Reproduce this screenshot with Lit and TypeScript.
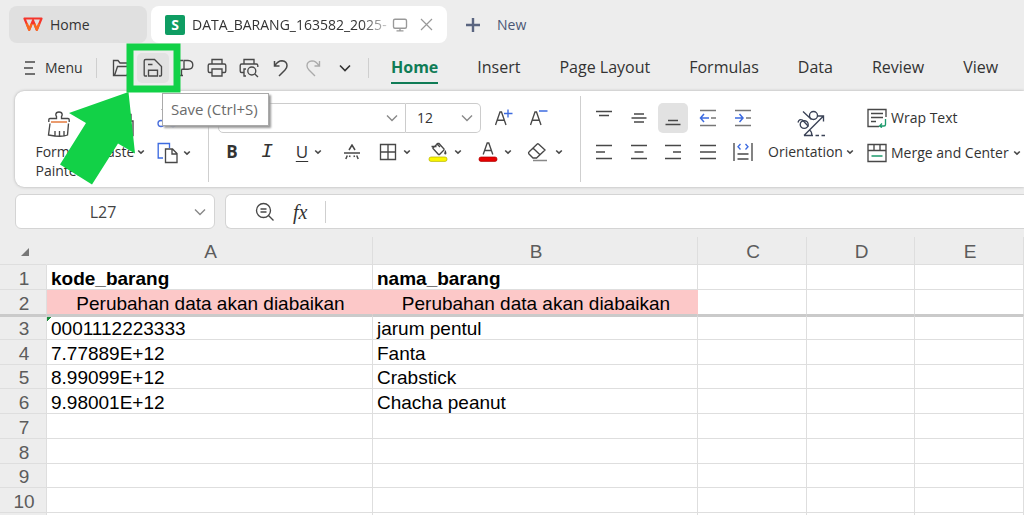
import { LitElement, html, svg, css, nothing, TemplateResult } from "lit";
import { customElement, state } from "lit/decorators.js";
import { classMap } from "lit/directives/class-map.js";

const icon = (w: number, h: number, body: unknown, cls = "") =>
  html`<svg class="icon ${cls}" width=${w} height=${h} viewBox="0 0 ${w} ${h}" aria-hidden="true">${body}</svg>`;

const chevron = () => icon(8, 8, svg`<path d="M1.2 2.5 4 5.2 6.8 2.5" stroke-width="1.6"/>`);
const wideChevron = (cls = "") => icon(12, 8, svg`<path d="M1 1.5 6 6.5 11 1.5"/>`, cls);

const wps = icon(20, 15, svg`
  <path d="M1.5 1.5H18.5L13.8 12.8 10 3.5 6.2 12.8Z" stroke="#f5352b" stroke-width="2.2" stroke-linejoin="round"/>
  <path d="M3.8 6.5 6.2 12.8 8.6 6.8M11.4 6.8 13.8 12.8 16.2 6.5" stroke="#f96a1e" stroke-width="2.2" stroke-linejoin="round"/>`);
const monitor = icon(16, 14, svg`
  <path d="M3 1.2H13Q14.5 1.2 14.5 2.7V8.7Q14.5 10.2 13 10.2H3Q1.5 10.2 1.5 8.7V2.7Q1.5 1.2 3 1.2ZM4.5 12.8H11.5M8 10.2V12.8" stroke="#999"/>`);
const close = icon(13, 13, svg`<path d="M1 1 12 12M12 1 1 12" stroke="#999" stroke-width="1.2"/>`);
const plus = icon(16, 16, svg`<path d="M8 1V15M1 8H15" stroke="#5a6580" stroke-width="2.4"/>`);
const burger = icon(12, 14, svg`<path d="M1 1H11M0 7H9M1 13H11"/>`);

const open = icon(20, 20, svg`<path d="M3.5 17.5H2.5V2.5H7L9 5H16.5V8M3.5 17.5 6.5 8.5H19L16 17.5Z"/>`);
const save = icon(20, 20, svg`
  <path d="M4 18H2Q1.2 18 1.2 17V3Q1.2 1.5 2.7 1.5H11.5L18.5 8.5V17Q18.5 18 17.5 18H16M5.5 18V12.2H14.5V18Z M5 6.5H9.5"/>`);
const exportPdf = icon(20, 20, svg`
  <path d="M8 17.5H1.5V2.5H8M9 12V2.5H13Q17.8 2.7 17.8 7 17.8 11.2 13 11.2H6.5M6.5 11.2V17"/>`);
const print = icon(20, 20, svg`
  <path d="M5 6V1.5H15V6M5 14.5H2.5Q1.2 14.5 1.2 13V7.5Q1.2 6 2.7 6H17.3Q18.8 6 18.8 7.5V13Q18.8 14.5 17.5 14.5H15M5 11H15V18H5Z"/>`);
const preview = icon(20, 20, svg`
  <path d="M5 6V1.5H15V6M5 14.5H2.5Q1.2 14.5 1.2 13V7.5Q1.2 6 2.7 6H17.3Q18.8 6 18.8 7.5V9M7 18H5V11H7"/>
  <circle cx="12.8" cy="13" r="4"/><path d="M15.8 16 19 19"/>`);
const undo = icon(16, 18, svg`<path d="M1.5 2V7H6.5M1.8 6.8Q5 1.8 9 1.8 14 2.2 14 6.8 14 9 12 11L6 17" stroke-width="1.5"/>`);
const redo = icon(16, 18, svg`<path d="M14.5 2V7H9.5M14.2 6.8Q11 1.8 7 1.8 2 2.2 2 6.8 2 9 4 11L10 17" stroke="#aaa"/>`);

const painter = icon(24, 26, svg`
  <path d="M1.8 11V8.8Q1.8 7.5 3 7.5H9.5V5.5Q8.8 4.5 8.8 3.5 9 1 12 1 15 1 15.2 3.5 15.2 4.5 14.5 5.5V7.5H21Q22.2 7.5 22.2 8.8V11M3 12.5 1.5 24Q15 26.5 20.5 24L21.5 12.5M8 24.5V20M12.5 25V20M17 24.5V20"/>
  <path d="M4 11H20" stroke="#e37a3e" stroke-width="1.6"/>`);
const paste = icon(24, 26, svg`
  <path d="M6 3.5H2V23H9M17 3.5H21V9M7 1.5H16V6H7ZM11 10H23V24.5H11Z"/>`);
const cut = icon(20, 20, svg`
  <path d="M5 1 13 14M15 1 7 14"/><g stroke="#4a6fdc"><circle cx="4" cy="15.5" r="3"/><circle cx="16" cy="15.5" r="3"/></g>`);
const copy = icon(22, 22, svg`
  <path d="M6 16H1.2V1.5H12.5V6" stroke="#3d6be0"/>
  <path d="M8.5 7H15.5L20 11.5V20.5H8.5ZM15 7V12H20" fill="#fff"/>`);

const strike = icon(18, 16, svg`<path d="M6 6 9 1 12 6M1 9H17M4.3 11.5 2.8 15M7 11.5 6.5 13M13.7 11.5 15.2 15M11 11.5 11.5 13" stroke-width="1.5"/>`);
const borders = icon(18, 18, svg`<path d="M1.5 1.5H16.5V16.5H1.5ZM9 1.5V16.5M1.5 9H16.5"/>`);
const fill = icon(20, 20, svg`
  <path d="M5 5V6.5L10.5 12.5H11.5L16 8V7L11 1.5H9.8L5.5 5.5M3.5 4.5H8.5M8.5 1.5 12 5"/>
  <path d="M17.5 8Q19.5 12.5 17.2 12.5 15 12.2 17.5 8" fill="#444" stroke="none"/>
  <rect x="1" y="15" width="18" height="4.4" rx="2" fill="#fcf800" stroke="#b5b000" stroke-width=".7"/>`);
const fontColor = icon(20, 20, svg`
  <path d="M5.2 12.5 9.2 1H10.8L14.8 12.5M6.8 8.5H13.2"/>
  <rect x="1" y="15" width="18" height="4.4" rx="2" fill="#e80000" stroke="#a00" stroke-width=".7"/>`);
const eraser = icon(22, 20, svg`
  <path d="M11.5 2 18 8 9.5 16H6L2 12Q1 10.8 2.2 9.8L10 2.2Q10.8 1.4 11.5 2ZM6.2 6.2 13 12.8"/>
  <path d="M6 18.5H20" stroke="#888"/>`);
const grow = icon(20, 20, svg`<path d="M1.5 17 6 4H7.5L12 17M3.2 12.2H10.3"/><path d="M14 1.5V9.5M10 5.5H18.5" stroke="#3d6be0"/>`);
const shrink = icon(20, 20, svg`<path d="M1.5 17 6 4H7.5L12 17M3.2 12.2H10.3"/><path d="M10 3H18.5" stroke="#3d6be0"/>`);

const lines = (d: string) => icon(18, 18, svg`<path d=${d}/>`);
const outdent = icon(18, 18, svg`
  <path d="M1 1.5H17M12 9H17M1 16.5H17" stroke="#777"/><path d="M10 9H1.5M5 5 1.5 9 5 13" stroke="#3d6be0" stroke-width="1.5"/>`);
const indent = icon(18, 18, svg`
  <path d="M1 1.5H17M12 9H17M1 16.5H17" stroke="#777"/><path d="M1 9H9M5.5 5 9 9 5.5 13" stroke="#3d6be0" stroke-width="1.5"/>`);
const distribute = icon(20, 20, svg`
  <path d="M1 1V19M19 1V19M4.5 12H15.5M4.5 17H15.5"/><path d="M7.5 2 5 4.8 7.5 7.5M12.5 2 15 4.8 12.5 7.5" stroke="#3d6be0"/>`);

const orientation = icon(30, 28, svg`
  <g stroke="#3a4256"><ellipse cx="8.2" cy="15.5" rx="4" ry="3.8"/><path d="M2 13.5Q3 9.5 6.5 11L12.5 17.5"/>
  <circle cx="17.5" cy="6.5" r="4"/><path d="M7 2.5 15.5 10.5M8 26.5 27 7.5M22 7H27.5V12.5M13.5 21Q16 22.5 15.8 26.5M8 26.5H17M19.5 26.5H23M25.5 26.5H29"/></g>`);
const wrap = icon(20, 20, svg`
  <path d="M12 18.5H1V1.5H19V9M4 5.5H16M4 9.5H16M4 13.5H9"/>
  <path d="M18.5 11V16.5Q18.5 18 17 18H12.5M15 15.5 12.5 18 15 19.5" stroke="#1d9a6c"/>`);
const merge = icon(20, 20, svg`
  <path d="M1 1.5H19V18.5H1ZM1 7.5H19M7 1.5V7.5M13 1.5V7.5"/><path d="M4.5 13H15.5" stroke="#1d9a6c"/>`);
const zoomIcon = icon(20, 20, svg`<circle cx="8.5" cy="8.5" r="7"/><path d="M5.5 7H11.5M5.5 10H11.5M13.5 13.5 18.5 18.5"/>`);

interface Tool { label: string; icon: TemplateResult; active?: boolean }

const QUICK: Tool[] = [
  { label: "Open", icon: open },
  { label: "Save", icon: save, active: true },
  { label: "Export to PDF", icon: exportPdf },
  { label: "Print", icon: print },
  { label: "Print preview", icon: preview },
  { label: "Undo", icon: undo },
  { label: "Redo", icon: redo },
  { label: "More commands", icon: wideChevron("dark") },
];

const ALIGN: Tool[] = [
  { label: "Top align", icon: lines("M1 2.5H17M4 6.5H14") },
  { label: "Middle align", icon: lines("M4 5H14M1.5 9H16.5M4 13H14") },
  { label: "Bottom align", icon: lines("M4 11.5H14M1.5 15.5H16.5"), active: true },
  { label: "Decrease indent", icon: outdent },
  { label: "Increase indent", icon: indent },
  { label: "Align left", icon: lines("M1 2.5H17M1 9H10M1 15.5H17") },
  { label: "Center", icon: lines("M1 2.5H17M4.5 9H13.5M1 15.5H17") },
  { label: "Align right", icon: lines("M1 2.5H17M9 9H17M1 15.5H17") },
  { label: "Justify", icon: lines("M1 2.5H17M1 9H17M1 15.5H17") },
  { label: "Distribute", icon: distribute },
];

const TABS = ["Home", "Insert", "Page Layout", "Formulas", "Data", "Review", "View"];
const COLUMNS = ["A", "B", "C", "D", "E"];
const ROWS: string[][] = [
  ["kode_barang", "nama_barang"],
  ["Perubahan data akan diabaikan", "Perubahan data akan diabaikan"],
  ["0001112223333", "jarum pentul"],
  ["7.77889E+12", "Fanta"],
  ["8.99099E+12", "Crabstick"],
  ["9.98001E+12", "Chacha peanut"],
  [], [], [], [],
];

@customElement("app-root")
export class AppRoot extends LitElement {
  @state() private tab = "Home";

  static styles = css`
    :host {
      display: block;
      position: relative;
      height: 100vh;
      overflow: hidden;
      background: #ededed;
      color: #333;
      font: 14px/20px "Open Sans", "Noto Sans", sans-serif;
    }
    * { box-sizing: border-box; }
    button, input, select {
      font: inherit;
      color: inherit;
      background: none;
      border: 0;
      padding: 0;
      margin: 0;
      min-width: 0;
      outline: none;
      appearance: none;
    }
    button { display: inline-flex; align-items: center; justify-content: center; }
    .icon { flex: none; display: block; fill: none; stroke: #484848; stroke-width: 1.35; }
    .muted { stroke: #888; }
    .dark { stroke: #333; stroke-width: 1.6; }

    .titlebar { display: flex; gap: 4px; padding: 6px 9px 0; }
    .doc-tab {
      display: flex;
      align-items: center;
      height: 37px;
      border-radius: 8px;
      background: #e0e0e0;
      padding: 0 14px;
    }
    .start { width: 138px; gap: 7px; justify-content: flex-start; }
    .current { width: 296px; background: #fff; }
    .sheet-badge {
      width: 20px;
      height: 20px;
      margin-right: 7px;
      border-radius: 2px;
      background: #0f9d63;
      color: #fff;
      font-weight: 700;
      text-align: center;
    }
    .filename {
      flex: 1;
      overflow: hidden;
      white-space: nowrap;
      mask-image: linear-gradient(to right, #000 86%, transparent 104%);
    }
    .doc-tab button { margin-left: 12px; }
    .doc-tab .present { margin-left: 4px; }
    .new { gap: 16px; padding: 0 14px; color: #4b5774; }

    .menubar { display: flex; align-items: center; height: 48px; padding: 2px 0 0 24px; }
    .menu { gap: 9px; width: 72px; justify-content: flex-start; }
    .divider { width: 1px; height: 20px; background: #cfcfcf; }
    .quick { display: flex; padding: 0 7px 0 8px; }
    .quick button { width: 32px; height: 30px; }
    .quick .active, .aligns .active { background: #e2e2e2; border-radius: 5px; }
    .tabs { display: flex; gap: 39px; padding-left: 22px; font-size: 16px; }
    .tabs button { height: 32px; white-space: nowrap; border-bottom: 2px solid transparent; }
    .tabs .selected { font-weight: 700; color: #107c56; border-color: #107c56; }

    .ribbon {
      display: flex;
      height: 96px;
      margin-left: 15px;
      padding: 5px 0;
      overflow: hidden;
      white-space: nowrap;
      background: #fff;
      border-radius: 9px 0 0 9px;
      box-shadow: 0 0 3px #aaa;
    }
    .ribbon .divider { height: 86px; flex: none; }
    .clipboard { display: flex; width: 193px; flex: none; }
    .big { flex-direction: column; justify-content: flex-start; padding-top: 15px; gap: 5px; }
    .big .caption { display: flex; align-items: center; gap: 3px; }
    .painter { width: 88px; white-space: normal; line-height: 19px; }
    .paste { width: 38px; }
    .stack { display: flex; flex-direction: column; align-items: flex-start; gap: 7px; }
    .clipboard .stack { padding: 8px 0 0 16px; }
    .stack button { gap: 4px; height: 28px; }

    .font { width: 371px; flex: none; padding: 7px 0 0 9px; }
    .row { display: flex; align-items: center; height: 30px; }
    .format { margin-top: 4px; padding-left: 2px; }
    .format button { width: 24px; height: 30px; gap: 6px; font-size: 17px; }
    .format .bold { font-weight: 700; }
    .format .italic { font-style: italic; font-family: "Liberation Mono", monospace; font-size: 20px; margin: 0 11px; }
    .format .drop { width: 38px; margin-right: 12px; }
    .format .struck { margin-right: 12px; }
    .underline { text-decoration: underline; text-underline-offset: 3px; }
    .combo {
      display: flex;
      align-items: center;
      height: 30px;
      border: 1px solid #ccc;
      padding-right: 7px;
    }
    .combo select { flex: 1; height: 100%; padding-left: 11px; }
    .family { width: 188px; border-radius: 5px 0 0 5px; }
    .size { width: 75px; border-left: 0; border-radius: 0 5px 5px 0; }
    .row .resize { width: 35px; height: 30px; }
    .resize.first { margin-left: 5px; }

    .aligns {
      display: grid;
      grid-template-columns: repeat(5, 1fr);
      justify-items: center;
      align-content: start;
      gap: 4px 0;
      width: 173px;
      flex: none;
      margin: 7px 0 0 6px;
    }
    .aligns button { width: 30px; height: 30px; }
    .orient { width: 102px; flex: none; padding-top: 13px; }
    .layout { padding: 8px 0 0 5px; }

    .formula-row { display: flex; gap: 10px; padding: 7px 0 0 15px; }
    .box {
      display: flex;
      align-items: center;
      height: 35px;
      background: #fff;
      border: 1px solid #d4d4d4;
      border-radius: 6px;
    }
    .name-box { width: 200px; padding-right: 8px; }
    .name-box input { flex: 1; text-align: center; color: #444; font-size: 16px; padding-right: 4px; }
    .formula { flex: 1; gap: 18px; padding-left: 29px; border-right: 0; border-radius: 6px 0 0 6px; }
    .formula input { flex: 1; height: 100%; }
    .fx { font: italic 20px/20px "Liberation Serif", serif; }
    .formula .divider { height: 22px; }

    .sheet {
      width: 100%;
      margin-top: 8px;
      table-layout: fixed;
      border-collapse: separate;
      border-spacing: 0;
      font: 19px/22px "Liberation Sans", Arial, sans-serif;
      color: #000;
    }
    .c-head { width: 47px; }
    .c-wide { width: 326px; }
    .c-mid { width: 325px; }
    .c-data { width: 108px; }
    .c-odd { width: 109px; }
    .sheet th, .sheet td {
      height: 25px;
      padding: 2px 0 0;
      border: 0 solid #dedede;
      border-width: 0 1px 1px 0;
      overflow: hidden;
      white-space: nowrap;
      text-align: left;
      line-height: 21px;
    }
    .sheet td { background: #fff; padding-left: 4px; }
    .sheet th { background: #ededed; color: #5c5c5c; font-weight: 400; text-align: center; padding-left: 2px; }
    .sheet thead th { height: 28px; }
    .sheet thead th:first-child { border-right-color: #ededed; }
    .sheet .corner svg { margin-left: 18px; }
    .sheet tbody tr:nth-child(4n + 1) > * { height: 24px; }
    .sheet tbody tr:first-child > * { height: 25px; }
    .sheet .title td { font-weight: 700; }
    .sheet .notice > * { border-bottom-color: #cacaca; }
    .sheet .notice .note { background: #fcc8c8; border-right-color: #fcc8c8; text-align: center; padding-left: 2px; }
    .sheet .after-freeze > * { border-top: 2px solid #cacaca; line-height: 20px; }
    .sheet .after-freeze td:nth-child(2) {
      background: linear-gradient(135deg, #1b8a3a 3px, transparent 3px) #fff;
    }

    .hint {
      position: absolute;
      left: 162px;
      top: 93px;
      padding: 5px 10px 6px 8px;
      background: #fff;
      border: 1px solid #aaa;
      box-shadow: 2px 2px 2px #999;
      color: #6b6b6b;
      font-size: 15px;
    }
    .marker { position: absolute; left: 0; top: 0; pointer-events: none; }
  `;

  private tool(t: Tool) {
    return html`<button class=${classMap({ active: !!t.active })} aria-label=${t.label}>${t.icon}</button>`;
  }

  private cells(row: string[], index: number) {
    const rowClass = { title: index === 0, notice: index === 1, "after-freeze": index === 2 };
    return html`<tr class=${classMap(rowClass)}>
      <th scope="row">${index + 1}</th>
      ${COLUMNS.map((_, c) => html`<td class=${index === 1 && c < 2 ? "note" : "cell"}>${row[c] ?? nothing}</td>`)}
      <td></td>
    </tr>`;
  }

  render() {
    return html`
      <header class="titlebar">
        <button class="doc-tab start">${wps}<span>Home</span></button>
        <div class="doc-tab current">
          <span class="sheet-badge">S</span>
          <span class="filename">DATA_BARANG_163582_2025-</span>
          <button class="present" aria-label="Present">${monitor}</button>
          <button aria-label="Close tab">${close}</button>
        </div>
        <button class="new">${plus}<span>New</span></button>
      </header>

      <nav class="menubar">
        <button class="menu">${burger}<span>Menu</span></button>
        <span class="divider"></span>
        <div class="quick">${QUICK.map((t) => this.tool(t))}</div>
        <span class="divider"></span>
        <div class="tabs">
          ${TABS.map((t) => html`<button class=${classMap({ selected: t === this.tab })}
            @click=${() => (this.tab = t)}>${t}</button>`)}
        </div>
      </nav>

      <section class="ribbon">
        <div class="clipboard">
          <button class="big painter">${painter}<span>Format Painter</span></button>
          <button class="big paste">${paste}<span class="caption">Paste ${chevron()}</span></button>
          <div class="stack">
            <button aria-label="Cut">${cut}</button>
            <button aria-label="Copy">${copy}${chevron()}</button>
          </div>
        </div>
        <span class="divider"></span>
        <div class="font">
          <div class="row">
            <label class="combo family"><select aria-label="Font"><option></option></select>${wideChevron("muted")}</label>
            <label class="combo size"><select aria-label="Font size"><option>12</option></select>${wideChevron("muted")}</label>
            <button class="resize first" aria-label="Increase font size">${grow}</button>
            <button class="resize" aria-label="Decrease font size">${shrink}</button>
          </div>
          <div class="row format">
            <button class="bold">B</button>
            <button class="italic">I</button>
            <button class="drop"><span class="underline">U</span>${chevron()}</button>
            <button class="struck" aria-label="Strikethrough">${strike}</button>
            <button class="drop" aria-label="Borders">${borders}${chevron()}</button>
            <button class="drop" aria-label="Fill color">${fill}${chevron()}</button>
            <button class="drop" aria-label="Font color">${fontColor}${chevron()}</button>
            <button class="drop" aria-label="Clear">${eraser}${chevron()}</button>
          </div>
        </div>
        <span class="divider"></span>
        <div class="aligns">${ALIGN.map((t) => this.tool(t))}</div>
        <button class="big orient">${orientation}<span class="caption">Orientation ${chevron()}</span></button>
        <div class="stack layout">
          <button>${wrap}Wrap Text</button>
          <button>${merge}Merge and Center ${chevron()}</button>
        </div>
      </section>

      <div class="formula-row">
        <label class="box name-box"><input aria-label="Name box" value="L27" />${wideChevron("muted")}</label>
        <div class="box formula">
          <button aria-label="Zoom out">${zoomIcon}</button>
          <button class="fx">fx</button>
          <span class="divider"></span>
          <input aria-label="Formula" />
        </div>
      </div>

      <table class="sheet">
        <colgroup>
          <col class="c-head" /><col class="c-wide" /><col class="c-mid" />
          <col class="c-odd" /><col class="c-data" /><col class="c-odd" /><col />
        </colgroup>
        <thead>
          <tr>
            <th class="corner" aria-label="Select all">
              ${icon(10, 10, svg`<path d="M9 1V9H1Z" fill="#777" stroke="none"/>`)}
            </th>
            ${COLUMNS.map((c) => html`<th scope="col">${c}</th>`)}
            <th></th>
          </tr>
        </thead>
        <tbody>
          ${ROWS.map((r, i) => this.cells(r, i))}
          <tr><th></th>${COLUMNS.map(() => html`<td></td>`)}<td></td></tr>
        </tbody>
      </table>

      <div class="hint" role="tooltip">Save (Ctrl+S)</div>
      <svg class="marker" width="190" height="190" viewBox="0 0 190 190" aria-hidden="true">
        <rect x="130" y="47" width="47" height="42" fill="none" stroke="#12d147" stroke-width="7" />
        <path d="M128.5 92 135 153.5 118 143.5 92 184.5 60 164.5 86 123 69 113Z" fill="#12d147" />
      </svg>
    `;
  }
}
